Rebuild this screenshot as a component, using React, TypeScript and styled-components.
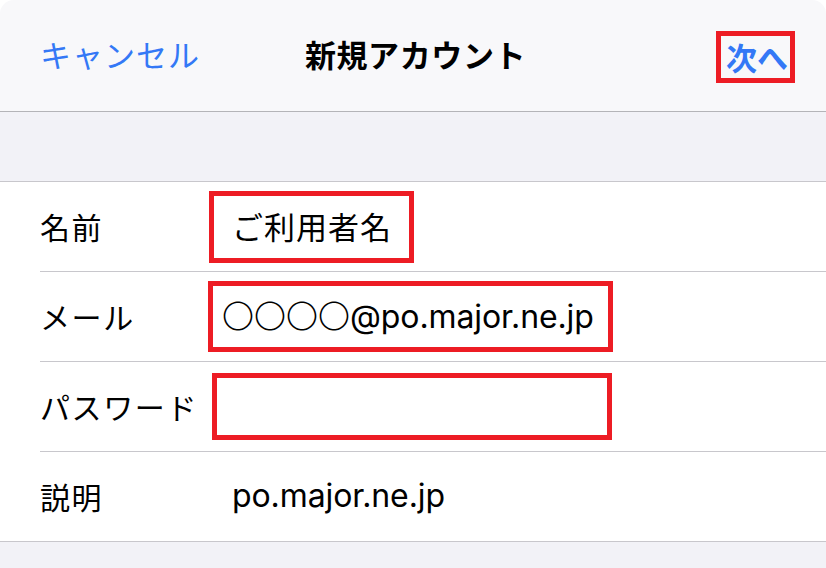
import React from "react";
import styled, { createGlobalStyle } from "styled-components";

const Global = createGlobalStyle`
  html, body { margin: 0; padding: 0; background: #ffffff; }
  body { font-family: "Inter", "Noto Sans CJK JP", sans-serif; -webkit-font-smoothing: antialiased; }
`;

const JP = `"Noto Sans CJK JP", "Inter", sans-serif`;
const LATIN = `"Inter", "Noto Sans CJK JP", sans-serif`;
const RED = "#ed1c24";
const BLUE = "#3478f6";

const Screen = styled.div`
  width: 826px;
  height: 568px;
  display: flex;
  flex-direction: column;
  overflow: hidden;
  background: #ffffff;
`;

const NavBar = styled.header`
  height: 111px;
  flex: none;
  background: #f8f8fa;
  border-bottom: 1px solid #b4b4b8;
  border-radius: 14px 14px 0 0;
  display: grid;
  grid-template-columns: 1fr auto 1fr;
  align-items: center;
  padding: 0 31px 0 40px;
`;

const NavButton = styled.span<{ $bold?: boolean }>`
  font-family: ${JP};
  font-size: 31px;
  color: ${BLUE};
  font-weight: ${(p) => (p.$bold ? 600 : 400)};
  letter-spacing: ${(p) => (p.$bold ? 0 : 1)}px;
  line-height: 1;
  justify-self: start;
  padding-bottom: ${(p) => (p.$bold ? 0 : 5)}px;
`;

const NavTitle = styled.h1`
  margin: 0 0 0 -4px;
  padding-bottom: 5px;
  font-family: ${JP};
  font-size: 31px;
  font-weight: 700;
  color: #000;
  line-height: 1;
  letter-spacing: 0.6px;
`;

const Marked = styled.span<{ $w?: number; $h: number; $pl: number }>`
  display: inline-flex;
  align-items: center;
  box-sizing: border-box;
  border: 5px solid ${RED};
  height: ${(p) => p.$h}px;
  ${(p) => (p.$w ? `width: ${p.$w}px;` : "")}
  padding-left: ${(p) => p.$pl}px;
`;

const NavRight = styled.div`
  justify-self: end;
  display: flex;
  margin-top: 2px;
`;

const Band = styled.div`
  height: 69px;
  flex: none;
  background: #f2f2f7;
  border-bottom: 1px solid #c8c7cc;
`;

const Form = styled.section`
  flex: none;
  background: #ffffff;
  border-bottom: 1px solid #c8c7cc;
`;

const Row = styled.div<{ $last?: boolean }>`
  margin-left: 40px;
  height: 89px;
  display: flex;
  align-items: center;
  border-bottom: ${(p) => (p.$last ? "none" : "1px solid #c8c7cc")};
`;

const Label = styled.span<{ $w: number }>`
  font-family: ${JP};
  font-size: 30px;
  letter-spacing: 1.6px;
  color: #000;
  width: ${(p) => p.$w}px;
  flex: none;
  line-height: 1;
  margin-top: -2px;
`;

const ValueText = styled.span<{ $jp?: boolean }>`
  font-family: ${(p) => (p.$jp ? JP : LATIN)};
  font-size: ${(p) => (p.$jp ? 31 : 32)}px;
  letter-spacing: ${(p) => (p.$jp ? 1 : -0.1)}px;
  color: #000;
  line-height: 1;
  white-space: nowrap;
  margin-top: -2px;
`;

const Circles = styled.span`
  font-family: ${JP};
  font-weight: 300;
  font-size: 32px;
  letter-spacing: 0px;
`;

const Footer = styled.div`
  flex: 1;
  background: #f2f2f7;
`;

export default function App() {
  return (
    <Screen>
      <Global />
      <NavBar>
        <NavButton>キャンセル</NavButton>
        <NavTitle>新規アカウント</NavTitle>
        <NavRight>
          <Marked $h={52} $w={79} $pl={5}>
            <NavButton $bold>次へ</NavButton>
          </Marked>
        </NavRight>
      </NavBar>
      <Band />
      <Form>
        <Row>
          <Label $w={169}>名前</Label>
          <Marked $h={72} $w={205} $pl={18}>
            <ValueText $jp>ご利用者名</ValueText>
          </Marked>
        </Row>
        <Row>
          <Label $w={168}>メール</Label>
          <Marked $h={71} $w={405} $pl={9}>
            <ValueText>
              <Circles>〇〇〇〇</Circles>@po.major.ne.jp
            </ValueText>
          </Marked>
        </Row>
        <Row>
          <Label $w={172}>パスワード</Label>
          <Marked $h={67} $w={400} $pl={0} />
        </Row>
        <Row $last>
          <Label $w={192}>説明</Label>
          <ValueText>po.major.ne.jp</ValueText>
        </Row>
      </Form>
      <Footer />
    </Screen>
  );
}
